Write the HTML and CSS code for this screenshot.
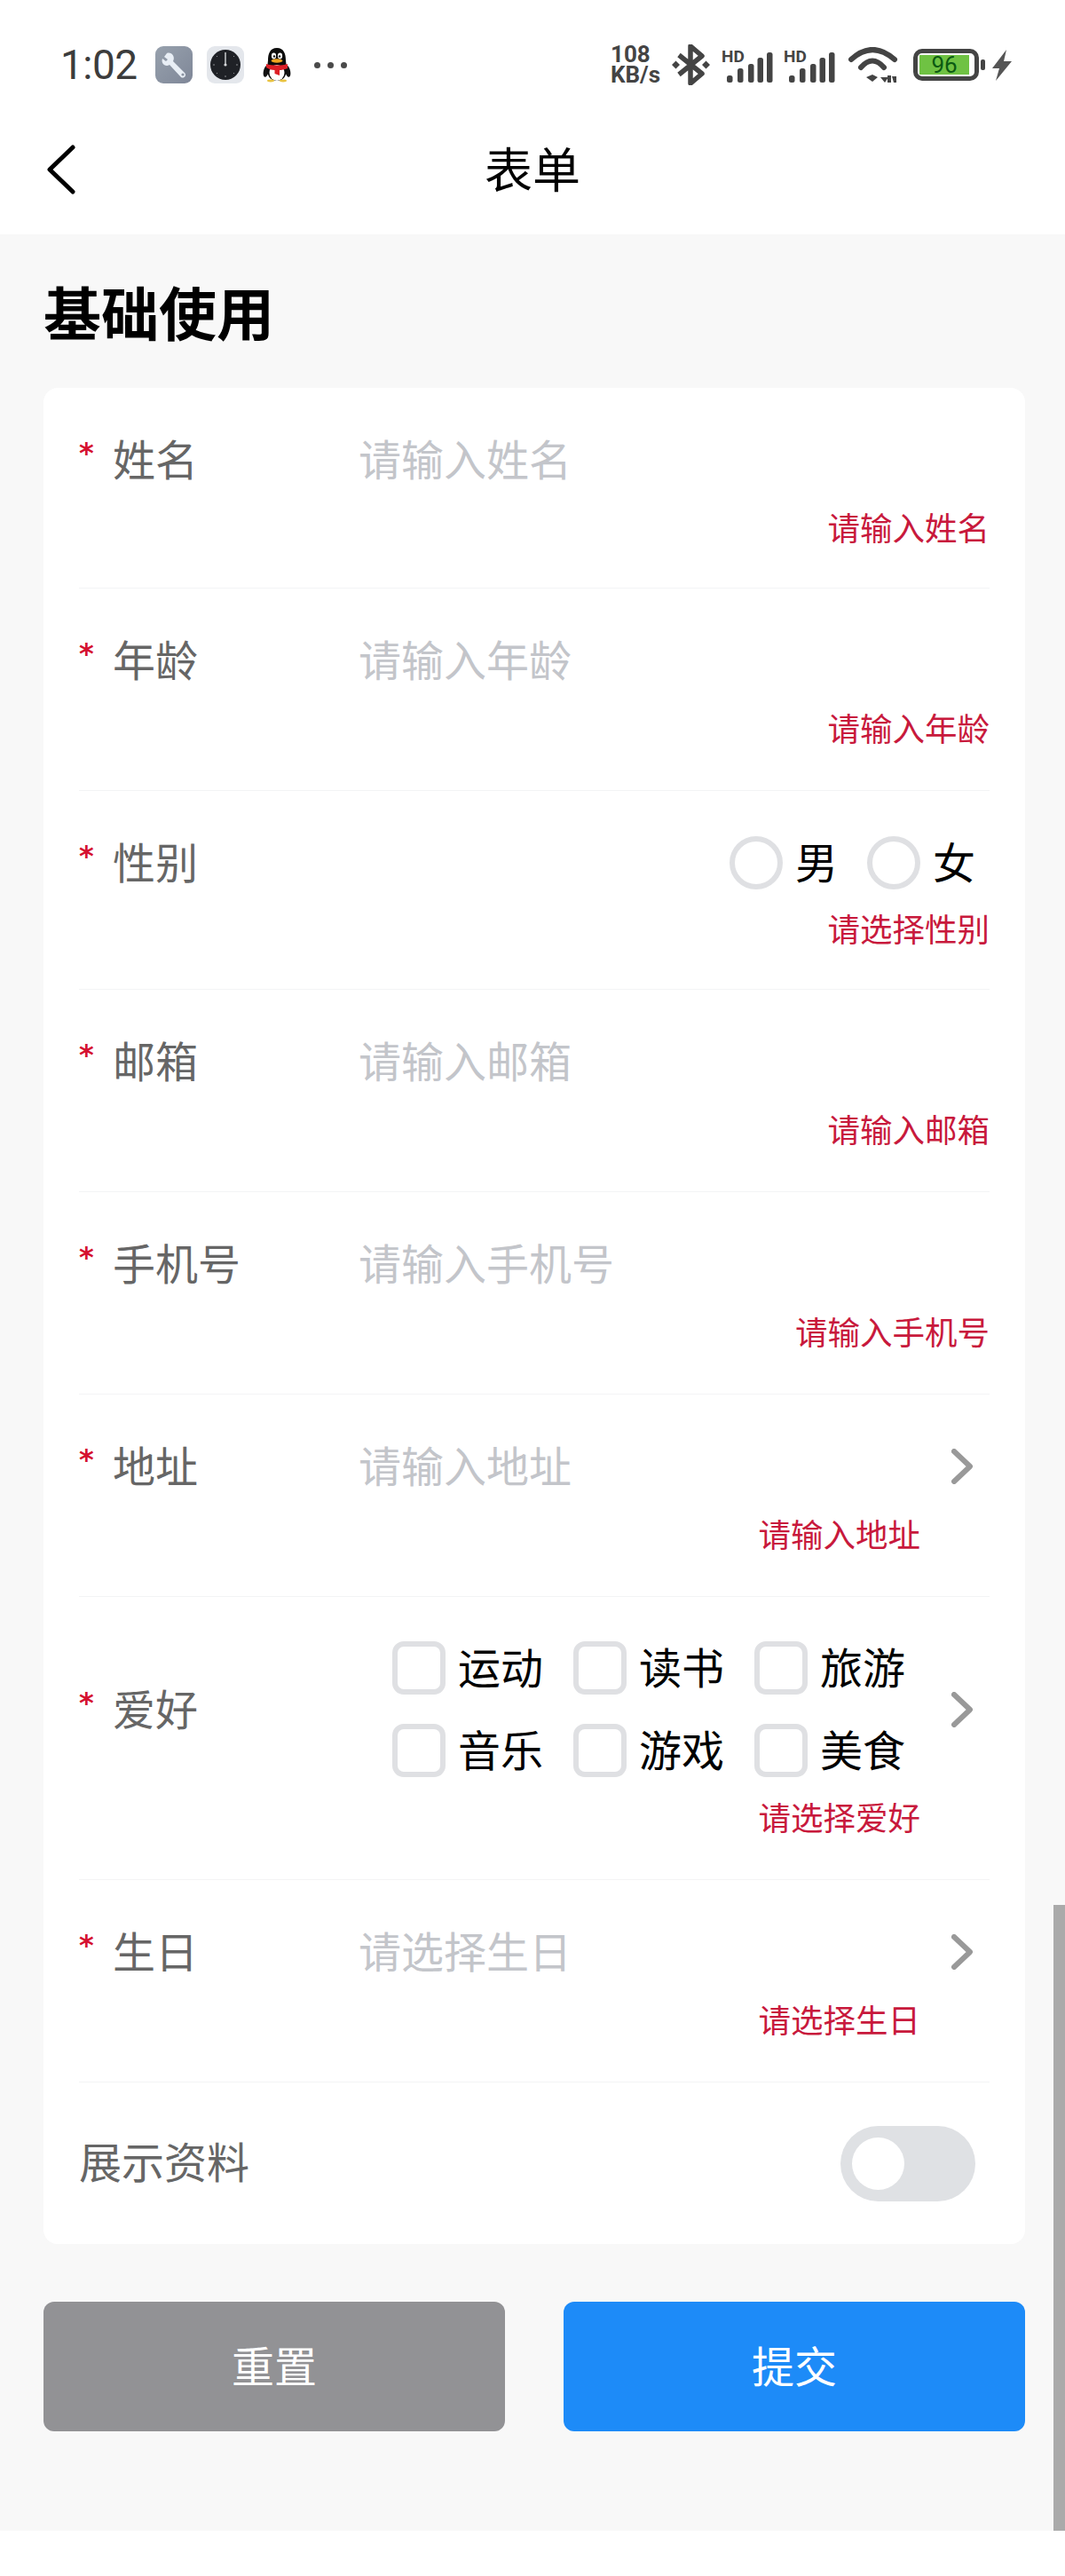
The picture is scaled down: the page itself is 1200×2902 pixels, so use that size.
FILE: index.html
```html
<!DOCTYPE html>
<html lang="zh-CN">
<head>
    <meta charset="UTF-8">
    <meta name="viewport" content="width=device-width, initial-scale=1.0">
    <title>表单</title>
    <link rel="stylesheet" href="styles.css">
</head>
<body>
    <div class="status-bar">
        <div class="status-left">
            <span class="time">1:02</span>
            <svg class="tile tile-wrench" width="42" height="42" viewBox="0 0 42 42">
                <defs>
                    <linearGradient id="wrenchBg" x1="0" y1="0" x2="1" y2="1">
                        <stop offset="0" stop-color="#97a1ad"/>
                        <stop offset="1" stop-color="#7f8798"/>
                    </linearGradient>
                </defs>
                <rect width="42" height="42" rx="9" fill="url(#wrenchBg)"/>
                <path d="M13 8 L10 12 L14 15 L12 17 L8 14 C6 19 11 24 16 21 L29 35 C32 37 36 33 33 30 L20 17 C23 12 18 6 13 8 Z" fill="#e8eef5"/>
                <circle cx="31" cy="32" r="1.6" fill="#8a92a1"/>
            </svg>
            <svg class="tile tile-clock" width="42" height="42" viewBox="0 0 42 42">
                <rect width="42" height="42" rx="9" fill="#e4e7ec"/>
                <circle cx="21" cy="21" r="17" fill="#1f2126"/>
                <path d="M21 7 V21" stroke="#d5d7da" stroke-width="1.4"/>
                <circle cx="21" cy="21" r="1.6" fill="#d5d7da"/>
                <path d="M35 21 H33 M9 21 H7 M21 35 V33 M31 11 L30 12 M11 11 L12 12 M31 31 L30 30 M11 31 L12 30" stroke="#8b8d90" stroke-width="1"/>
            </svg>
            <svg class="tile tile-qq" width="32" height="40" viewBox="0 0 32 40">
                <ellipse cx="4" cy="27" rx="3" ry="7" fill="#111" transform="rotate(14 4 27)"/>
                <ellipse cx="28" cy="27" rx="3" ry="7" fill="#111" transform="rotate(-14 28 27)"/>
                <path d="M16 1 C8 1 6 8 6 15 L5 24 C5 33 9 38 16 38 C23 38 27 33 27 24 L26 15 C26 8 24 1 16 1 Z" fill="#0c0c0c"/>
                <ellipse cx="16" cy="29" rx="8.5" ry="9" fill="#fff"/>
                <ellipse cx="12.5" cy="10" rx="2.6" ry="3.4" fill="#fff"/>
                <ellipse cx="19.5" cy="10" rx="2.6" ry="3.4" fill="#fff"/>
                <circle cx="13" cy="10.5" r="1.2" fill="#111"/>
                <circle cx="19" cy="10.5" r="1.2" fill="#111"/>
                <ellipse cx="16" cy="15.5" rx="6.5" ry="2.2" fill="#eda31f"/>
                <path d="M4 19 C10 21 22 21 28 19 L28 24 C24 25.5 21 26 19 26 L19 32 L13.5 30 L13.5 26 C10 26 7 25 4 23 Z" fill="#dd1f26"/>
                <ellipse cx="9" cy="38" rx="4" ry="1.4" fill="#e9c341"/>
                <ellipse cx="23" cy="38" rx="4" ry="1.4" fill="#e9c341"/>
            </svg>
            <div class="dots"><i></i><i></i><i></i></div>
        </div>
        <div class="status-right">
            <div class="speed"><span>108</span><span>KB/s</span></div>
            <svg class="bt" width="43" height="46" viewBox="0 0 43 46" fill="none">
                <path d="M8 12 L34 33 L21 44 V2 L34 13 L8 34" stroke="#444" stroke-width="5.5" stroke-linejoin="round"/>
                <path d="M0 23 L4.5 18.5 L9 23 L4.5 27.5 Z M34 23 L38.5 18.5 L43 23 L38.5 27.5 Z" fill="#444"/>
            </svg>
            <svg class="signal" width="60" height="42" viewBox="0 0 60 42">
                <text class="hd" x="0" y="18">HD</text>
                <rect x="6" y="33" width="6.5" height="8" rx="2.5"/>
                <rect x="18" y="25" width="6.5" height="16" rx="2.5"/>
                <rect x="30" y="20" width="6.5" height="21" rx="2.5"/>
                <rect x="40.5" y="13" width="6.5" height="28" rx="2.5"/>
                <rect x="51" y="7" width="6.5" height="34" rx="2.5"/>
            </svg>
            <svg class="signal" width="60" height="42" viewBox="0 0 60 42">
                <text class="hd" x="0" y="18">HD</text>
                <rect x="6" y="33" width="6.5" height="8" rx="2.5"/>
                <rect x="18" y="25" width="6.5" height="16" rx="2.5"/>
                <rect x="30" y="20" width="6.5" height="21" rx="2.5"/>
                <rect x="40.5" y="13" width="6.5" height="28" rx="2.5"/>
                <rect x="51" y="7" width="6.5" height="34" rx="2.5"/>
            </svg>
            <svg class="wifi" width="56" height="41" viewBox="0 0 56 41" fill="none">
                <path d="M3 14 Q27 -8 52 14" stroke="#444" stroke-width="6" stroke-linecap="round"/>
                <path d="M14 23 Q27 8 40 23" stroke="#444" stroke-width="6" stroke-linecap="round"/>
                <path d="M20 34 L27 31 L33 34 L27 39 Z" fill="#444"/>
                <path d="M36 34 H45 L41 40 Z M44 40 V32 H48 V40 Z M49 33 H54 V40 H51 Z" fill="#444"/>
            </svg>
            <div class="battery">
                <div class="battery-body"><div class="battery-fill">96</div></div>
                <i class="battery-nub"></i>
            </div>
            <svg class="bolt" width="22" height="35" viewBox="0 0 22 35">
                <path d="M16 0 L0 21 H8 L4 35 L22 13 H13 Z" fill="#555"/>
            </svg>
        </div>
    </div>

    <div class="nav-bar">
        <svg class="nav-back" width="32" height="56" viewBox="0 0 32 56" fill="none">
            <path d="M29 3 L3 28 L29 53" stroke="#000" stroke-width="5" stroke-linecap="round" stroke-linejoin="round"/>
        </svg>
        <span class="nav-title">表单</span>
    </div>

    <div class="page">
        <h2 class="section-title">基础使用</h2>

        <div class="card">
            <div class="row row-first">
                <div class="field">
                    <span class="star">*</span><span class="label">姓名</span>
                    <span class="placeholder">请输入姓名</span>
                </div>
                <div class="error">请输入姓名</div>
            </div>
            <div class="row">
                <div class="field">
                    <span class="star">*</span><span class="label">年龄</span>
                    <span class="placeholder">请输入年龄</span>
                </div>
                <div class="error">请输入年龄</div>
            </div>
            <div class="row row-radio">
                <div class="field">
                    <span class="star">*</span><span class="label">性别</span>
                    <div class="radio-group">
                        <div class="option"><i class="radio"></i><span>男</span></div>
                        <div class="option"><i class="radio"></i><span>女</span></div>
                    </div>
                </div>
                <div class="error">请选择性别</div>
            </div>
            <div class="row">
                <div class="field">
                    <span class="star">*</span><span class="label">邮箱</span>
                    <span class="placeholder">请输入邮箱</span>
                </div>
                <div class="error">请输入邮箱</div>
            </div>
            <div class="row">
                <div class="field">
                    <span class="star">*</span><span class="label">手机号</span>
                    <span class="placeholder">请输入手机号</span>
                </div>
                <div class="error">请输入手机号</div>
            </div>
            <div class="row">
                <div class="field">
                    <span class="star">*</span><span class="label">地址</span>
                    <span class="placeholder">请输入地址</span>
                    <svg class="arrow" width="24" height="40" viewBox="0 0 24 40" fill="none"><path d="M3 3 L21 20 L3 37" stroke="#999" stroke-width="6" stroke-linecap="round" stroke-linejoin="round"/></svg>
                </div>
                <div class="error error-arrow">请输入地址</div>
            </div>
            <div class="row">
                <div class="field">
                    <span class="star">*</span><span class="label">爱好</span>
                    <div class="check-group">
                        <div class="option"><i class="check"></i><span>运动</span></div>
                        <div class="option"><i class="check"></i><span>读书</span></div>
                        <div class="option"><i class="check"></i><span>旅游</span></div>
                        <div class="option"><i class="check"></i><span>音乐</span></div>
                        <div class="option"><i class="check"></i><span>游戏</span></div>
                        <div class="option"><i class="check"></i><span>美食</span></div>
                    </div>
                    <svg class="arrow" width="24" height="40" viewBox="0 0 24 40" fill="none"><path d="M3 3 L21 20 L3 37" stroke="#999" stroke-width="6" stroke-linecap="round" stroke-linejoin="round"/></svg>
                </div>
                <div class="error error-arrow">请选择爱好</div>
            </div>
            <div class="row">
                <div class="field">
                    <span class="star">*</span><span class="label">生日</span>
                    <span class="placeholder">请选择生日</span>
                    <svg class="arrow" width="24" height="40" viewBox="0 0 24 40" fill="none"><path d="M3 3 L21 20 L3 37" stroke="#999" stroke-width="6" stroke-linecap="round" stroke-linejoin="round"/></svg>
                </div>
                <div class="error error-arrow">请选择生日</div>
            </div>
            <div class="row-switch">
                <span class="switch-label">展示资料</span>
                <div class="switch"><i></i></div>
            </div>
        </div>

        <div class="buttons">
            <div class="btn btn-reset"><span>重置</span></div>
            <div class="btn btn-submit"><span>提交</span></div>
        </div>
        <div class="scroll-thumb"></div>
    </div>
</body>
</html>
```

FILE: styles.css
```css
* {
    box-sizing: border-box;
}
body {
    margin: 0;
    background-color: #fff;
    font-family: "Noto Sans CJK SC", "Noto Sans", sans-serif;
}

/* status bar */
.status-bar {
    height: 118px;
    padding: 28px 60px 0 68px;
    display: flex;
    justify-content: space-between;
}
.status-left, .status-right {
    height: 90px;
    display: flex;
    align-items: center;
}
.time {
    font-family: Roboto, sans-serif;
    font-size: 46px;
    letter-spacing: -0.5px;
    color: #3c3c3c;
    width: 107px;
}
.tile-clock {
    margin-left: 16px;
}
.tile-qq {
    margin-left: 21px;
}
.dots {
    display: flex;
    gap: 8px;
    margin-left: 26px;
}
.dots i {
    width: 7px;
    height: 7px;
    border-radius: 50%;
    background-color: #4a4a4a;
}
.speed {
    display: flex;
    flex-direction: column;
    width: 69px;
    font-family: Roboto, sans-serif;
    font-weight: 700;
    color: #444;
    font-size: 26px;
    line-height: 23px;
}
.bt {
    margin-right: 13px;
}
.signal {
    margin-right: 10px;
}
.hd {
    font-family: Roboto, sans-serif;
    font-size: 19px;
    font-weight: 700;
    fill: #444;
}
.signal rect {
    fill: #444;
}
.wifi {
    margin: 0 17px 0 3px;
}
.battery {
    display: flex;
    align-items: center;
    gap: 2px;
    margin-right: 8px;
}
.battery-body {
    width: 74px;
    height: 36px;
    border: 5px solid #444;
    border-radius: 10px;
    padding: 2px;
}
.battery-fill {
    width: 56px;
    height: 22px;
    background-color: #6fc243;
    color: #0b5a12;
    font-family: Roboto, sans-serif;
    font-size: 26px;
    line-height: 22px;
    text-align: center;
}
.battery-nub {
    width: 5px;
    height: 12px;
    border-radius: 2px;
    background-color: #444;
}

/* nav */
.nav-bar {
    height: 146px;
    padding-bottom: 6px;
    display: flex;
    align-items: center;
    justify-content: center;
    position: relative;
}
.nav-back {
    position: absolute;
    left: 53px;
    top: 45px;
}
.nav-title {
    font-size: 54px;
    color: #000;
}

/* page */
.page {
    height: 2587px;
    padding: 0 45px 0 49px;
    background-color: #f8f8f8;
    position: relative;
}
.section-title {
    margin: 0;
    height: 173px;
    padding-top: 41px;
    font-size: 65px;
    line-height: 90px;
    font-weight: 700;
    color: #000;
}
.card {
    height: 2091px;
    padding: 0 40px;
    background-color: #fff;
    border-radius: 16px;
}

/* rows */
.row {
    padding: 36px 0 52px;
    border-bottom: 1px solid #f3f4f5;
}
.row-first {
    padding-bottom: 50px;
}
.row-radio {
    padding-bottom: 50px;
}
.row-radio .error {
    margin-top: 11px;
}
.field {
    min-height: 90px;
    display: flex;
    align-items: center;
}
.star {
    width: 38px;
    color: #d5102f;
    font-family: "DejaVu Sans", sans-serif;
    font-size: 32px;
    font-weight: 700;
    line-height: 40px;
    height: 40px;
    margin-top: -16px;
}
.label {
    width: 277px;
    padding-bottom: 6px;
    font-size: 48px;
    color: #666;
    line-height: 60px;
}
.placeholder {
    padding-bottom: 6px;
    font-size: 48px;
    color: #c3c5ca;
    line-height: 60px;
}
.error {
    margin-top: 13px;
    text-align: right;
    font-size: 36.5px;
    line-height: 36px;
    color: #c8193c;
}
.error-arrow {
    padding-right: 78px;
}
.arrow {
    margin-left: auto;
    margin-right: 19px;
}

/* options */
.radio-group {
    display: flex;
    gap: 2px;
    margin-left: auto;
    padding-right: 16px;
}
.check-group {
    display: grid;
    grid-template-columns: repeat(3, 204px);
    row-gap: 33px;
    margin-left: 38px;
    padding: 14px 0;
}
.option {
    display: flex;
    align-items: center;
    gap: 14px;
    height: 60px;
    font-size: 48px;
    line-height: 60px;
    color: #000;
}
.option span {
    margin-top: -6px;
}
.radio-group .option:first-child {
    width: 153px;
}
.radio {
    width: 60px;
    height: 60px;
    border: 6px solid #dfe0e3;
    border-radius: 50%;
}
.check {
    width: 60px;
    height: 60px;
    border: 6px solid #dfe0e3;
    border-radius: 13px;
}

/* switch row */
.row-switch {
    height: 182px;
    display: flex;
    align-items: center;
    justify-content: space-between;
}
.switch-label {
    padding-bottom: 8px;
    font-size: 48px;
    color: #666;
}
.switch {
    width: 152px;
    height: 85px;
    margin-right: 16px;
    padding: 13px;
    border-radius: 43px;
    background-color: #dfe1e4;
}
.switch i {
    display: block;
    width: 59px;
    height: 59px;
    border-radius: 50%;
    background-color: #fff;
}

/* buttons */
.buttons {
    display: flex;
    justify-content: space-between;
    margin-top: 65px;
}
.btn {
    width: 520px;
    height: 146px;
    border-radius: 12px;
    display: flex;
    align-items: center;
    justify-content: center;
    color: #fff;
    font-size: 48px;
}
.btn span {
    padding-bottom: 6px;
}
.btn-reset {
    background-color: #929295;
}
.btn-submit {
    background-color: #1d8bf8;
}

/* overlay scrollbar */
.scroll-thumb {
    position: absolute;
    right: 0;
    bottom: 0;
    width: 13px;
    height: 705px;
    background-color: #aaa;
}
```
